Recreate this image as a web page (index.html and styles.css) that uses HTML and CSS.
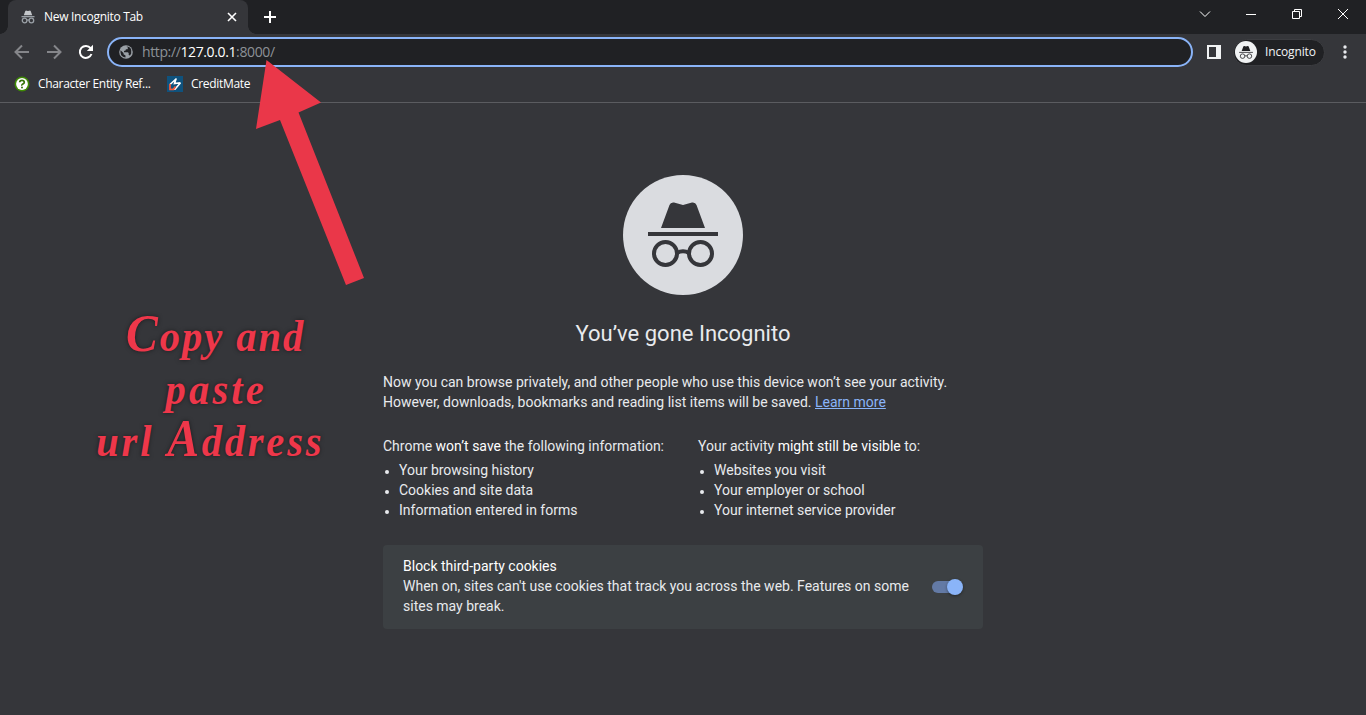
FILE: index.html
```html
<!DOCTYPE html>
<html lang="en">
<head>
<meta charset="utf-8">
<title>New Incognito Tab</title>
<link rel="stylesheet" href="styles.css">
</head>
<body>
<svg class="defs" width="0" height="0">
  <symbol id="spy" viewBox="0 0 70 66">
    <path d="M13 26 21.500 3Q22.500 0 26 .5L35 3 44 .5Q47.500 0 48.500 3L57 26Z"/>
    <path d="M0 30h70v4H0z"/>
    <g fill="none" stroke="currentColor" stroke-width="4"><circle cx="17.500" cy="51.500" r="11.500"/><circle cx="52.500" cy="51.500" r="11.500"/><path d="M29 51Q35 47.500 41 51"/></g>
  </symbol>
</svg>
<header class="tabstrip">
  <div class="tab">
    <svg class="tab-icon" viewBox="0 0 14 14"><path fill="#c4c7ca" d="M2.800 5.200 4.200 1.200Q4.700.4 5.600.7L7 1.100 8.400.7Q9.300.4 9.800 1.200L11.200 5.200Z"/><path d="M.5 6h13v1.300H.5z"/><g fill="none" stroke="currentColor" stroke-width="1.300"><circle cx="3.600" cy="10.500" r="2.300"/><circle cx="10.400" cy="10.500" r="2.300"/><path d="M5.900 10.200Q7 9.500 8.100 10.200"/></g></svg>
    <span class="tab-title">New Incognito Tab</span>
    <svg class="tab-close" viewBox="0 0 10 10"><path d="M1 1l8 8M9 1L1 9"/></svg>
  </div>
  <svg class="new-tab" viewBox="0 0 12 12"><path d="M6 0v12M0 6h12"/></svg>
  <div class="window-controls">
    <svg viewBox="0 0 12 12"><path d="M1 3.500l5 5 5-5"/></svg>
    <svg viewBox="0 0 12 12"><path d="M1 6.500h10" shape-rendering="crispEdges"/></svg>
    <svg viewBox="0 0 12 12"><path d="M1.500 3.500h7v7h-7zM3.500 3.500v-2h7v7h-2" /></svg>
    <svg viewBox="0 0 12 12"><path d="M1 1l10 10M11 1L1 11"/></svg>
  </div>
</header>
<nav class="toolbar">
  <svg class="nav-icon dim" viewBox="0 0 16 16"><path d="M15 8H2M8 1.500L1.500 8 8 14.500"/></svg>
  <svg class="nav-icon dim" viewBox="0 0 16 16"><path d="M1 8h13M8 1.500L14.500 8 8 14.500"/></svg>
  <svg class="nav-icon" viewBox="0 0 16 16"><path d="M13.500 10A6 6 0 1 1 12.600 4.200"/><path class="solid" d="M15 .8V7H8.800Z"/></svg>
  <div class="omnibox">
    <svg class="globe" viewBox="0 0 14 14"><circle cx="7" cy="7" r="6.800"/><path class="land" d="M1.500 5.200 4.500 8v1.300L6.500 10.500V12.600Q2 12 1.500 7.500ZM7.500 1.500Q11 1.600 12.200 4.700V8.500L11 10.500 9.700 10V8L8.800 7.200H5V6L6.800 5.300V4.200H8.500L9 2.800Z"/></svg>
    <span class="url">http://<b>127.0.0.1</b>:8000/</span>
  </div>
  <svg class="panel-icon" viewBox="0 0 14 14"><path fill-rule="evenodd" d="M0 0h14v14H0zM2 2v10h7V2z"/></svg>
  <div class="profile">
    <span class="avatar"><svg viewBox="0 0 70 66"><use href="#spy"/></svg></span>
    <span class="profile-name">Incognito</span>
  </div>
  <svg class="menu" viewBox="0 0 4 14"><circle cx="2" cy="2" r="1.700"/><circle cx="2" cy="7" r="1.700"/><circle cx="2" cy="12" r="1.700"/></svg>
</nav>
<div class="bookmarks">
  <svg class="bm-icon" viewBox="0 0 16 16"><circle cx="8" cy="8" r="7.500" fill="#3f8a05"/><circle cx="8" cy="8" r="5.900" fill="#fff"/><path d="M5.700 6.300Q5.800 4.300 8 4.300T10.300 6.200Q10.300 7.200 8.900 8T8 9.600" fill="none" stroke="#37750b" stroke-width="1.700"/><circle cx="8" cy="11.600" r="1" fill="#37750b"/></svg>
  <span class="bm-first">Character Entity Ref...</span>
  <svg class="bm-icon bm-credit" viewBox="0 0 16 16"><path fill="#0f527d" d="M0 0h16v16H0z"/><path d="M9.500 2.500 3 8.500M9 3 7.500 7.500 13.500 6.800M13.500 6.800 8 13.300H6" fill="none" stroke="#fff" stroke-width="1.600"/><path d="M3 8v5.300H6.500L8.500 10.500" fill="none" stroke="#ef5a3c" stroke-width="1.800"/></svg>
  <span class="bm-second">CreditMate</span>
</div>
<main class="page">
  <div class="hero"><svg viewBox="0 0 70 66"><use href="#spy"/></svg></div>
  <h1>You’ve gone Incognito</h1>
  <p class="intro">Now you can browse privately, and other people who use this device won’t see your activity.<br>However, downloads, bookmarks and reading list items will be saved. <a>Learn more</a></p>
  <div class="columns">
    <section>
      <p>Chrome <em>won’t save</em> the following information:</p>
      <ul><li>Your browsing history</li><li>Cookies and site data</li><li>Information entered in forms</li></ul>
    </section>
    <section>
      <p>Your activity <em>might still be visible</em> to:</p>
      <ul><li>Websites you visit</li><li>Your employer or school</li><li>Your internet service provider</li></ul>
    </section>
  </div>
  <div class="cookies">
    <div class="cookies-text"><p class="cookies-title">Block third-party cookies</p><p>When on, sites can't use cookies that track you across the web. Features on some<br>sites may break.</p></div>
    <span class="toggle"><i></i></span>
  </div>
</main>
<svg class="arrow" viewBox="0 0 110 226"><path d="M11.500 0 66 42.500 43.500 52.500 109 218 91 225 25 60 1 69Z"/></svg>
<div class="note">
  <div class="note-one"><span>C</span>opy and</div>
  <div class="note-two">paste</div>
  <div class="note-three">url <span>A</span>ddress</div>
</div>
</body>
</html>
```
FILE: styles.css
```css
* { box-sizing: border-box; }
body { margin: 0; width: 1366px; height: 715px; overflow: hidden; position: relative; background: #35363a; color: #e8eaed; font: 14px/20px Roboto, sans-serif; }
svg { display: block; flex: none; fill: currentColor; }
p, h1, ul { margin: 0; }
.defs { position: absolute; }

.tabstrip { height: 34px; background: #202124; display: flex; padding-left: 8px; color: #fff; font: 12px/34px "Open Sans", sans-serif; }
.tab { width: 240px; height: 34px; background: #35363a; border-radius: 8px 8px 0 0; display: flex; align-items: center; padding: 0 11px 0 13px; position: relative; }
.tab::before, .tab::after { content: ""; position: absolute; bottom: 0; width: 8px; height: 8px; }
.tab::before { left: -8px; background: radial-gradient(circle at 0 0, #202124 7.5px, #35363a 8px); }
.tab::after { right: -8px; background: radial-gradient(circle at 100% 0, #202124 7.5px, #35363a 8px); }
.tab-icon { width: 14px; height: 14px; color: #9aa0a6; margin-right: 9px; }
.tab-title { flex: 1; white-space: nowrap; letter-spacing: -.3px; }
.tab-close { width: 10px; height: 10px; stroke: #fff; stroke-width: 1.600; }
.new-tab { width: 12px; height: 12px; margin: 11px 0 0 16px; stroke: #fff; stroke-width: 2; }
.window-controls { margin-left: auto; display: flex; gap: 34px; padding: 8px 17px 0 0; }
.window-controls svg { width: 12px; height: 12px; fill: none; stroke: #fff; stroke-width: 1; }

.toolbar { height: 36px; display: flex; align-items: center; padding-left: 14px; font: 12px/16px "Open Sans", sans-serif; }
.nav-icon { width: 16px; height: 16px; margin-right: 16px; fill: none; stroke: #fff; stroke-width: 2; }
.nav-icon.dim { stroke: #85868a; }
.nav-icon .solid { fill: #fff; stroke: none; }
.nav-icon:nth-child(3) { margin-right: 13px; }
.omnibox { width: 1086px; height: 30px; border: 2px solid #8ab4f8; border-radius: 15px; background: #202124; display: flex; align-items: center; padding-left: 10px; font-size: 14px; color: #8d9297; }
.globe { width: 14px; height: 14px; margin-right: 9px; color: #9aa0a6; }
.globe .land { fill: #202124; }
.url { letter-spacing: -.38px; }
.url b { font-weight: 400; color: #fff; }
.panel-icon { width: 14px; height: 14px; margin-left: 14px; color: #f1f3f4; }
.profile { margin-left: 12px; width: 92px; height: 27px; border: 1px solid #3c3d41; border-radius: 14px; background: #202124; display: flex; align-items: center; padding-left: 1px; color: #f1f3f4; }
.avatar { width: 22px; height: 22px; border-radius: 50%; background: #f1f3f4; color: #202124; display: grid; place-items: center; margin-right: 8px; }
.avatar svg { width: 14px; height: 13px; }
.profile-name { letter-spacing: -.15px; }
.menu { width: 4px; height: 14px; margin-left: 17.500px; }

.bookmarks { height: 33px; display: flex; align-items: center; padding: 0 0 4px 14px; border-bottom: 1px solid #5b5c60; font: 12px/16px "Open Sans", sans-serif; color: #fff; }
.bm-icon { width: 16px; height: 16px; margin-right: 8px; }
.bm-first { width: 129px; white-space: nowrap; letter-spacing: -.34px; }
.bm-second { letter-spacing: -.32px; }

.page { width: 600px; margin: 72px auto 0; }
.hero { width: 120px; height: 120px; margin: 0 auto; border-radius: 50%; background: #dadce0; color: #35363a; display: grid; place-items: center; }
.hero svg { width: 70px; height: 66px; }
h1 { margin-top: 25px; text-align: center; font-weight: 400; font-size: 22px; line-height: 28px; }
.intro { margin-top: 24px; white-space: nowrap; }
a { color: #8ab4f8; text-decoration: underline; }
.columns { display: grid; grid-template-columns: 285px 285px; gap: 30px; margin-top: 24px; }
.columns p { white-space: nowrap; }
em { font-style: normal; color: #fff; }
ul { margin-top: 4px; padding-left: 16px; }
li::marker { font-size: 12px; }
.cookies { margin-top: 25px; height: 84px; border-radius: 4px; background: #3c4043; display: flex; align-items: center; justify-content: space-between; padding: 0 20px; white-space: nowrap; }
.cookies-text { padding-bottom: 2px; }
.cookies-title { color: #fff; }
.toggle { width: 31px; height: 16px; display: flex; align-items: center; position: relative; }
.toggle::before { content: ""; width: 28px; height: 12px; border-radius: 6px; background: #637aa5; }
.toggle i { position: absolute; right: 0; top: 0; width: 16px; height: 16px; border-radius: 50%; background: #8ab4f8; box-shadow: 0 1px 3px rgba(0,0,0,.4); }

.arrow { position: absolute; left: 255px; top: 60px; width: 110px; height: 226px; color: #ea3749; }
.note { position: absolute; left: 90px; top: 310px; width: 270px; color: #ee374a; font: italic 700 45px/52.500px "Liberation Serif", serif; text-shadow: 0 0 5px rgba(0,0,0,.5); white-space: nowrap; transform: scaleX(.9); transform-origin: 0 0; }
.note span { font-size: 53px; line-height: 0; }
.note-one { padding-left: 40px; letter-spacing: 2.200px; }
.note-two { padding-left: 84px; letter-spacing: 3.500px; }
.note-three { padding-left: 7px; letter-spacing: 3.100px; }
```
